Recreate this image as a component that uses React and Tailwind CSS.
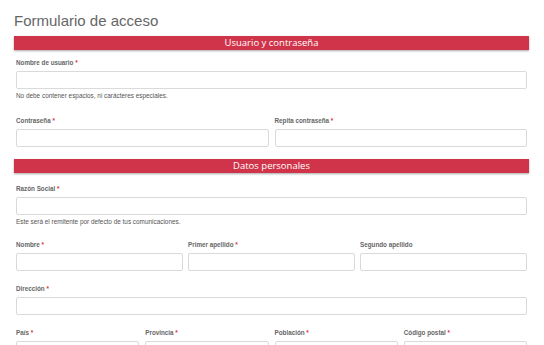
import React from 'react';

const Bar = ({ title }) => (
  <div className="h-[14px] bg-[#d0344a] text-white text-center text-[9.5px] leading-[14px] shadow-[0_1px_2px_rgba(0,0,0,0.35)] font-['Open_Sans',sans-serif]">
    {title}
  </div>
);

const Field = ({ label, required = true }) => (
  <div>
    <div className="h-[8px] text-[6.3px] leading-[8px] font-bold text-[#666]">
      {label}
      {required && <span className="text-[#d33]"> *</span>}
    </div>
    <div className="mt-[4px] h-[18px] rounded-[2px] border border-[#dadada] bg-white" />
  </div>
);

const Help = ({ children }) => (
  <p className="mt-[3px] h-[8px] text-[6.4px] leading-[8px] text-[#555]">{children}</p>
);

export default function App() {
  return (
    <div className="min-h-screen bg-white pl-[14px] pr-[15px] font-['Liberation_Sans',Arial,sans-serif]">
      <h1 className="pt-[11px] text-[15px] leading-[20px] text-[#666]">Formulario de acceso</h1>

      <div className="mt-[5px]">
        <Bar title="Usuario y contraseña" />
      </div>
      <div className="px-[2px]">
        <div className="mt-[9px]">
          <Field label="Nombre de usuario" />
        </div>
        <Help>No debe contener espacios, ni carácteres especiales.</Help>
        <div className="mt-[17px] grid grid-cols-2 gap-x-[6px]">
          <Field label="Contraseña" />
          <Field label="Repita contraseña" />
        </div>
      </div>

      <div className="mt-[12px]">
        <Bar title="Datos personales" />
      </div>
      <div className="px-[2px]">
        <div className="mt-[12px]">
          <Field label="Razón Social" />
        </div>
        <Help>Este será el remitente por defecto de tus comunicaciones.</Help>
        <div className="mt-[15px] grid grid-cols-3 gap-x-[5px]">
          <Field label="Nombre" />
          <Field label="Primer apellido" />
          <Field label="Segundo apellido" required={false} />
        </div>
        <div className="mt-[14px]">
          <Field label="Dirección" />
        </div>
        <div className="mt-[14px] grid grid-cols-4 gap-x-[6px]">
          <Field label="País" />
          <Field label="Provincia" />
          <Field label="Población" />
          <Field label="Código postal" />
        </div>
      </div>
    </div>
  );
}
